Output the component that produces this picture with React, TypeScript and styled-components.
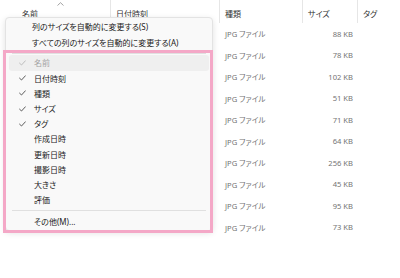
import React from "react";
import styled, { createGlobalStyle } from "styled-components";

const Global = createGlobalStyle`
  html, body { margin: 0; padding: 0; background: #ffffff; }
  body {
    font-family: "Noto Sans", "Noto Sans CJK JP", sans-serif;
    font-feature-settings: "palt";
    -webkit-font-smoothing: antialiased;
  }
  #root { width: 400px; height: 278px; }
`;

const COLS = "111px 109px 83px 55px 1fr";

const Page = styled.div`
  position: relative;
  width: 400px;
  height: 278px;
  overflow: hidden;
  background: #ffffff;
`;

const Header = styled.div`
  display: grid;
  grid-template-columns: ${COLS};
  height: 23px;
`;

const HeaderCell = styled.div<{ $pad?: number; $last?: boolean }>`
  position: relative;
  display: flex;
  align-items: center;
  padding-left: ${(p) => p.$pad ?? 5}px;
  padding-top: 3px;
  font-size: 8px;
  color: #333333;
  border-right: ${(p) => (p.$last ? "none" : "1px solid #e6e6e6")};
`;

const SortCaret = styled.svg`
  position: absolute;
  left: 57px;
  top: 2px;
`;

const Body = styled.div`
  display: flex;
  flex-direction: column;
`;

const Row = styled.div`
  display: grid;
  grid-template-columns: ${COLS};
  height: 21.5px;
  align-items: center;
  font-size: 7.6px;
  color: #747474;
`;

const Cell = styled.div<{ $right?: boolean }>`
  padding: 0 5px;
  text-align: ${(p) => (p.$right ? "right" : "left")};
  white-space: nowrap;
`;

const Menu = styled.div`
  position: absolute;
  left: 5px;
  top: 17px;
  width: 206px;
  padding: 0 0 1px;
  background: #f9f9f9;
  border: 1px solid #e3e3e3;
  border-radius: 4px;
  box-shadow: 0 2px 6px rgba(0, 0, 0, 0.12);
  display: flex;
  flex-direction: column;
  font-size: 8px;
  color: #222222;
`;

const TopItem = styled.div`
  height: 16.5px;
  display: flex;
  align-items: center;
  padding-left: 26px;
  white-space: nowrap;
`;

const Item = styled.div<{ $disabled?: boolean; $hover?: boolean }>`
  height: 15.2px;
  display: flex;
  align-items: center;
  margin: 0 3px;
  border-radius: 3px;
  background: ${(p) => (p.$hover ? "#efefef" : "transparent")};
  color: ${(p) => (p.$disabled ? "#a3a3a3" : "#222222")};
  white-space: nowrap;
`;

const CheckSlot = styled.div`
  width: 23px;
  display: flex;
  justify-content: center;
  padding-left: 2px;
`;

const Separator = styled.div<{ $top: number; $bottom: number }>`
  height: 1px;
  background: #e0e0e0;
  margin: ${(p) => p.$top}px 6px ${(p) => p.$bottom}px;
`;

const Highlight = styled.div`
  position: absolute;
  left: 3px;
  top: 50px;
  width: 210px;
  height: 183px;
  box-sizing: border-box;
  border: 3px solid #f4a8c7;
  pointer-events: none;
`;

const Check: React.FC<{ color: string }> = ({ color }) => (
  <svg width="7" height="6" viewBox="0 0 7 6">
    <path d="M0.6 3.2 L2.5 5 L6.4 0.8" fill="none" stroke={color} strokeWidth="0.8" strokeLinecap="round" strokeLinejoin="round" />
  </svg>
);

const sizes = ["88 KB", "78 KB", "102 KB", "51 KB", "71 KB", "64 KB", "256 KB", "45 KB", "95 KB", "73 KB"];

const columns: { label: string; checked: boolean; disabled?: boolean; hover?: boolean }[] = [
  { label: "名前", checked: true, disabled: true, hover: true },
  { label: "日付時刻", checked: true },
  { label: "種類", checked: true },
  { label: "サイズ", checked: true },
  { label: "タグ", checked: true },
  { label: "作成日時", checked: false },
  { label: "更新日時", checked: false },
  { label: "撮影日時", checked: false },
  { label: "大きさ", checked: false },
  { label: "評価", checked: false },
];

export default function App() {
  return (
    <Page>
      <Global />
      <Header>
        <HeaderCell $pad={22}>
          名前
          <SortCaret width="7" height="4" viewBox="0 0 7 4">
            <path d="M0.5 3.5 L3.5 0.7 L6.5 3.5" fill="none" stroke="#8a8a8a" strokeWidth="0.8" />
          </SortCaret>
        </HeaderCell>
        <HeaderCell>日付時刻</HeaderCell>
        <HeaderCell>種類</HeaderCell>
        <HeaderCell>サイズ</HeaderCell>
        <HeaderCell $last>タグ</HeaderCell>
      </Header>
      <Body>
        {sizes.map((s, i) => (
          <Row key={i}>
            <Cell />
            <Cell />
            <Cell>JPG ファイル</Cell>
            <Cell $right>{s}</Cell>
            <Cell />
          </Row>
        ))}
      </Body>
      <Menu>
        <TopItem>列のサイズを自動的に変更する(S)</TopItem>
        <TopItem>すべての列のサイズを自動的に変更する(A)</TopItem>
        <Separator $top={2} $bottom={1.4} />
        {columns.map((c) => (
          <Item key={c.label} $disabled={c.disabled} $hover={c.hover}>
            <CheckSlot>{c.checked && <Check color={c.disabled ? "#b0b0b0" : "#333333"} />}</CheckSlot>
            {c.label}
          </Item>
        ))}
        <Separator $top={3} $bottom={3} />
        <Item>
          <CheckSlot />
          その他(M)...
        </Item>
      </Menu>
      <Highlight />
    </Page>
  );
}
